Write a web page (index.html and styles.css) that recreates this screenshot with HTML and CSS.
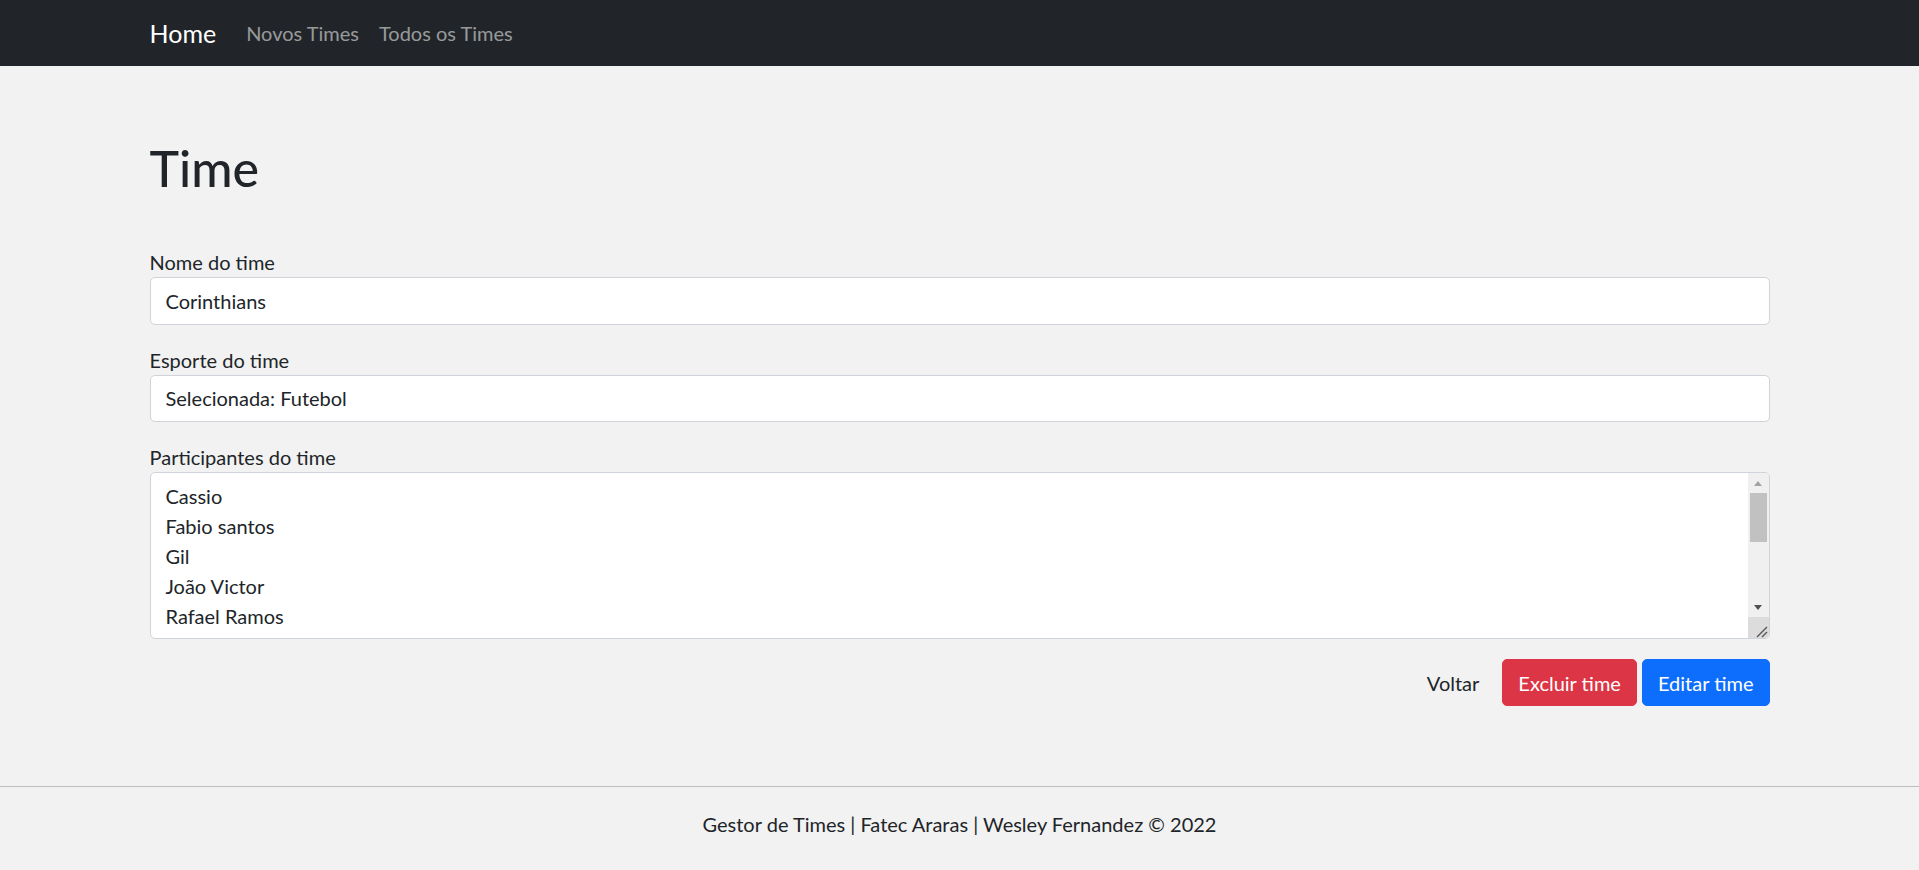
FILE: index.html
```html
<!DOCTYPE html>
<html lang="pt-BR">
<head>
<meta charset="utf-8">
<title>Time</title>
<link rel="stylesheet" href="styles.css">
</head>
<body>
<nav class="navbar">
  <div class="container nav-inner">
    <a class="brand" href="#">Home</a>
    <a class="nav-link" href="#">Novos Times</a>
    <a class="nav-link" href="#">Todos os Times</a>
  </div>
</nav>
<main class="container main">
  <h1 class="title">Time</h1>
  <form class="team-form">
    <div class="field">
      <label class="label" for="nome">Nome do time</label>
      <input class="control" id="nome" type="text" value="Corinthians" readonly>
    </div>
    <div class="field">
      <label class="label" for="esporte">Esporte do time</label>
      <input class="control" id="esporte" type="text" value="Selecionada: Futebol" readonly>
    </div>
    <div class="field">
      <label class="label" for="participantes">Participantes do time</label>
      <div class="textarea-wrap">
        <textarea class="control members" id="participantes" rows="5" readonly>Cassio
Fabio santos
Gil
João Victor
Rafael Ramos
Renato Augusto
Roger Guedes
Willian
Yuri Alberto
Du Queiroz
Fagner</textarea>
        <div class="fake-scroll" aria-hidden="true">
          <div class="sb-btn"><span class="arrow-up"></span></div>
          <div class="sb-track"><div class="sb-thumb"></div></div>
          <div class="sb-btn"><span class="arrow-down"></span></div>
          <div class="sb-corner">
            <svg width="21" height="21" viewBox="0 0 21 21"><path d="M9 20 L19 10 M14 20 L19 15" stroke="#555" stroke-width="1.4" fill="none"/></svg>
          </div>
        </div>
      </div>
    </div>
    <div class="actions">
      <a class="btn btn-link" href="#">Voltar</a>
      <button type="button" class="btn btn-danger">Excluir time</button>
      <button type="button" class="btn btn-primary">Editar time</button>
    </div>
  </form>
</main>
<footer class="footer">
  <p class="footer-text">Gestor de Times | Fatec Araras | Wesley Fernandez © 2022</p>
</footer>
</body>
</html>
```
FILE: styles.css
```css
* { box-sizing: border-box; }
html, body { margin: 0; padding: 0; }
body {
  font-family: Lato, "Noto Sans", sans-serif;
  font-size: 20px;
  line-height: 1.5;
  color: #212529;
  background: #f2f2f2;
}
a { text-decoration: none; }

.container {
  width: 1650px;
  margin: 0 auto;
  padding: 0 15px;
}

/* navbar */
.navbar {
  background: #212529;
  padding: 8px 0;
}
.nav-inner {
  display: flex;
  align-items: center;
  height: 50px;
}
.brand {
  color: #fff;
  font-size: 25px;
  line-height: 37.5px;
  margin-right: 20px;
  padding-top: 1px;
}
.nav-link {
  color: rgba(255, 255, 255, 0.55);
  font-size: 20px;
  line-height: 30px;
  padding: 0 10px;
}

/* main */
.main {
  padding-top: 72px;
  padding-bottom: 80px;
}
.title {
  font-size: 50px;
  font-weight: 500;
  line-height: 60px;
  margin: 0 0 49px;
}
.field { margin-bottom: 20px; }
.label {
  display: block;
  line-height: 30px;
}
.control {
  display: block;
  width: 100%;
  font-family: inherit;
  font-size: 20px;
  line-height: 30px;
  color: #212529;
  background: #fff;
  border: 1px solid #ced4da;
  border-radius: 5px;
  padding: 7.5px 15px;
  height: 47.5px;
  outline: none;
  margin: 0;
}

.textarea-wrap { position: relative; }
.members {
  height: 167px;
  resize: none;
  overflow: hidden;
  padding-right: 36px;
}
.fake-scroll {
  position: absolute;
  top: 1px;
  right: 1px;
  bottom: 1px;
  width: 21px;
  background: #f0f0f0;
  display: flex;
  flex-direction: column;
  border-radius: 0 4px 4px 0;
  overflow: hidden;
}
.sb-btn {
  height: 20px;
  display: flex;
  align-items: center;
  justify-content: center;
}
.arrow-up {
  width: 0; height: 0;
  border-left: 4.5px solid transparent;
  border-right: 4.5px solid transparent;
  border-bottom: 5px solid #a3a3a3;
}
.arrow-down {
  width: 0; height: 0;
  border-left: 4.5px solid transparent;
  border-right: 4.5px solid transparent;
  border-top: 5px solid #505050;
}
.sb-track {
  flex: 1;
  padding: 0 2px;
}
.sb-thumb {
  height: 49px;
  background: #c1c1c1;
}
.sb-corner {
  height: 21px;
  background: #dcdcdc;
}
.sb-corner svg { display: block; }

.actions {
  display: flex;
  justify-content: flex-end;
  gap: 5px;
  margin-top: 20px;
}
.btn {
  display: inline-block;
  font-family: inherit;
  font-size: 20px;
  line-height: 30px;
  padding: 7.5px 15px;
  border: 1px solid transparent;
  border-radius: 5px;
  cursor: pointer;
}
.btn-link { color: #212529; background: transparent; margin-right: 2px; }
.btn-danger { color: #fff; background: #dc3545; border-color: #dc3545; }
.btn-primary { color: #fff; background: #0d6efd; border-color: #0d6efd; }

/* footer */
.footer {
  border-top: 1px solid #bebebe;
  padding: 22px 0 30px;
  text-align: center;
}
.footer-text { margin: 0; line-height: 30px; }
```
